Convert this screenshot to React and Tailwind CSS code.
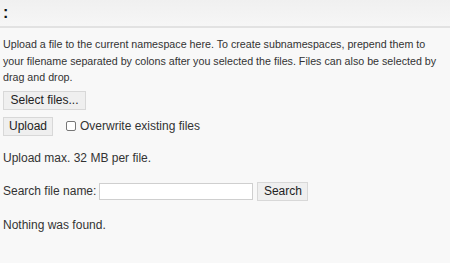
export default function App() {
  return (
    <div className="w-[450px] h-[263px] overflow-hidden bg-[#f8f8f8] text-[#333] text-[12px] leading-[16px]" style={{ fontFamily: '"Liberation Sans", Arial, sans-serif' }}>
      <div className="h-[28px] bg-gradient-to-b from-[#f0f0f0] to-[#f6f6f6] border-b-2 border-[#e2e2e2] px-[3px] flex items-center">
        <span className="font-bold text-[16px] text-[#111] leading-none">:</span>
      </div>
      <div className="px-[3px]">
        <p className="mt-[8px] pr-[6px] text-[10.7px] leading-[16.5px]">
          Upload a file to the current namespace here. To create subnamespaces, prepend them to your filename separated by colons after you selected the files. Files can also be selected by drag and drop.
        </p>
        <button className="mt-[5px] h-[19px] w-[83px] bg-[#efefef] border border-[#d8d8d8] text-[#222] leading-none">
          Select files...
        </button>
        <div className="mt-[7px] flex items-center">
          <button className="h-[19px] w-[50px] bg-[#efefef] border border-[#d8d8d8] text-[#222] leading-none">
            Upload
          </button>
          <label className="ml-[13px] flex items-center gap-[4px]">
            <span className="w-[10px] h-[10px] border border-[#777] rounded-[2px] bg-white" />
            Overwrite existing files
          </label>
        </div>
        <p className="mt-[14px]">Upload max. 32 MB per file.</p>
        <div className="mt-[16px] flex items-center">
          <span>Search file name:</span>
          <span className="ml-[3px] w-[154px] h-[17px] bg-white border border-[#cfcfcf]" />
          <button className="ml-[4px] h-[19px] w-[51px] bg-[#efefef] border border-[#d8d8d8] text-[#222] leading-none">
            Search
          </button>
        </div>
        <p className="mt-[16px]">Nothing was found.</p>
      </div>
    </div>
  );
}
